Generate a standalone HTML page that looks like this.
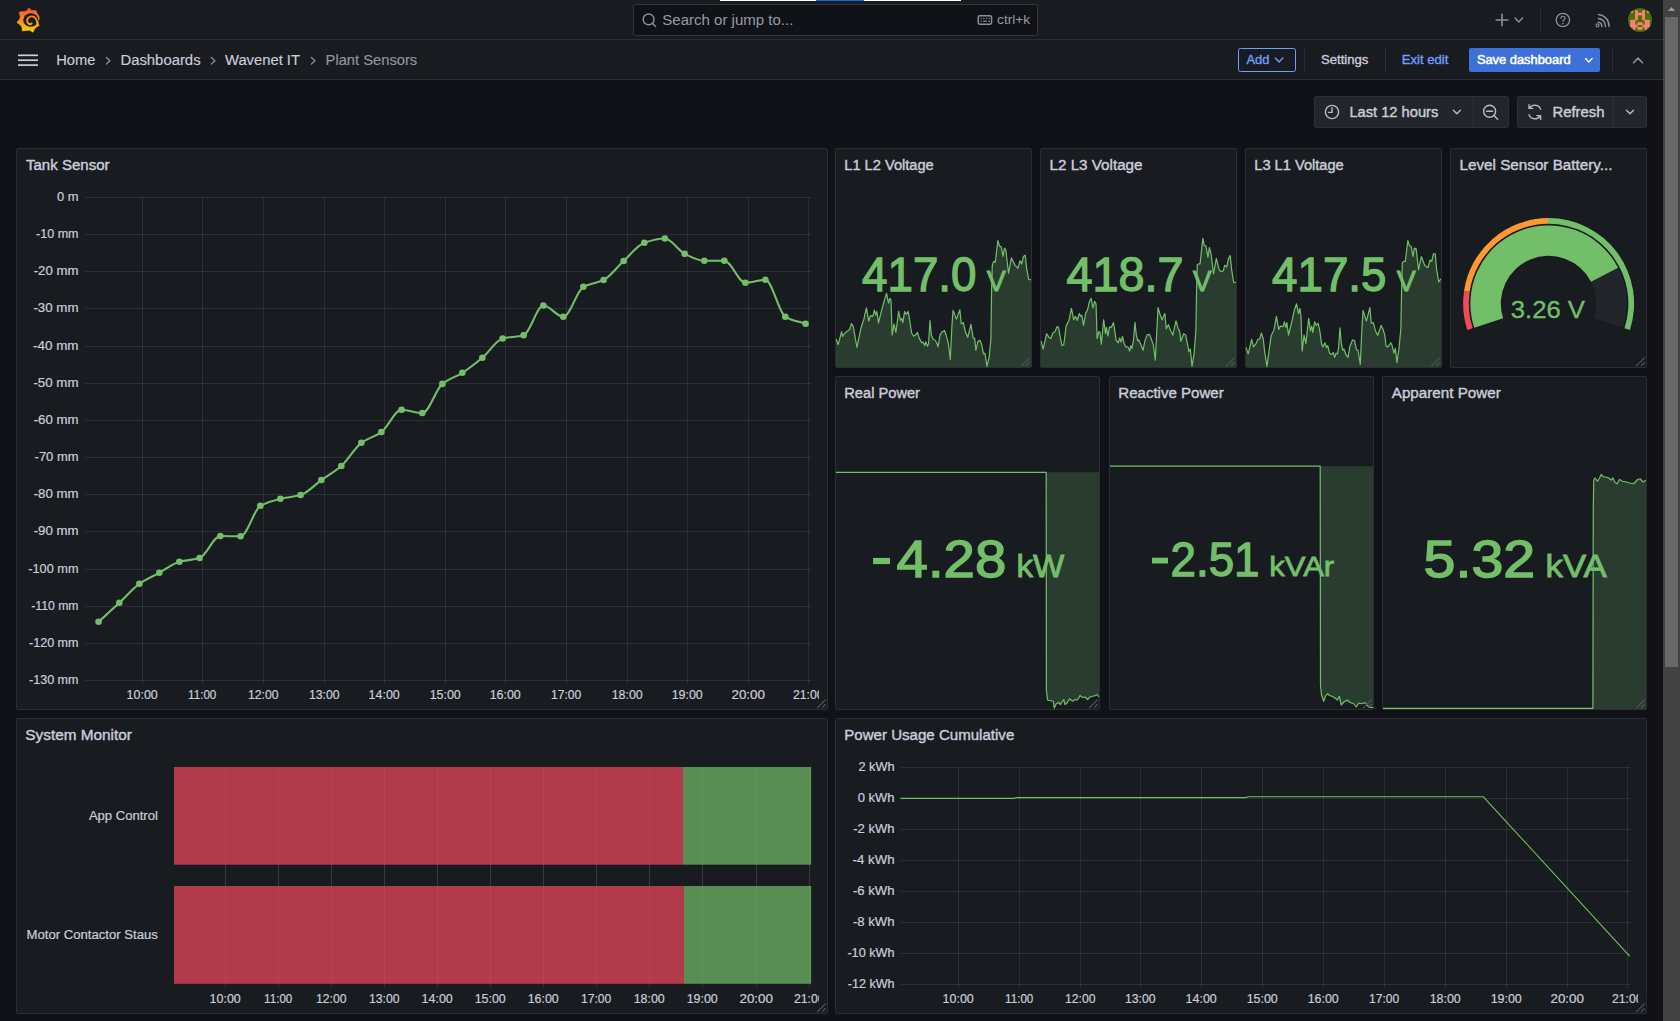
<!DOCTYPE html>
<html lang="en">
<head>
<meta charset="utf-8">
<title>Plant Sensors - Wavenet IT - Dashboards - Grafana</title>
<style>
html,body{margin:0;padding:0;background:#111217;overflow:hidden;}
body{width:1680px;height:1021px;font-family:"Liberation Sans",sans-serif;}
svg{display:block;font-family:"Liberation Sans",sans-serif;}
text{white-space:pre;}
</style>
</head>
<body>
<svg width="1680" height="1021" viewBox="0 0 1680 1021">
<defs>
<linearGradient id="lg" gradientUnits="userSpaceOnUse" x1="0" y1="8" x2="0" y2="32"><stop offset="0" stop-color="#f2552c"/><stop offset="0.45" stop-color="#f68a1e"/><stop offset="1" stop-color="#fcd00a"/></linearGradient>
<clipPath id="avc"><circle cx="1640" cy="20" r="12"/></clipPath>
<clipPath id="c1"><rect x="17" y="149" width="802" height="560"/></clipPath>
<clipPath id="c7"><rect x="17" y="719" width="802" height="294"/></clipPath>
<clipPath id="c8"><rect x="836.5" y="719" width="802" height="294"/></clipPath>
</defs>
<rect x="0" y="0" width="1680" height="1021" fill="#111217"/>
<rect x="0" y="0" width="1663" height="80" fill="#181b1f"/>
<line x1="0" y1="39.5" x2="1663" y2="39.5" stroke="#2c2e33" stroke-width="1"/>
<line x1="0" y1="79.5" x2="1663" y2="79.5" stroke="#2c2e33" stroke-width="1"/>
<rect x="720" y="0" width="241" height="1" fill="#ffffff"/>
<rect x="816" y="0" width="48" height="1" fill="#0a6fd8"/>
<g>
<path d="M28.87,7.82 L31.16,10.4 L36.03,10.47 L36.88,13.11 L38.99,16.29 L39.21,19.46 L38.22,19.64 L38.11,23.16 L39.21,25.46 L36.81,26.69 L34.69,28.81 L32.93,32.16 L29.75,30.22 L25.52,30.57 L22.28,30.92 L21.99,27.4 L20.58,25.28 L16.88,22.46 L19.52,19.28 L20.41,16.81 L18.99,12.41 L21.64,11.59 L24.81,11.52 L26.93,10.47Z" fill="url(#lg)" stroke="url(#lg)" stroke-width="0.6" stroke-linejoin="round"/>
<ellipse cx="30.81" cy="20.06" rx="7.6" ry="6.8" fill="#181b1f"/>
<path d="M37.23,25.7 C37.51,22.63 36.98,19.46 34.87,17.59 C32.93,16 29.93,16.18 28.17,17.94 C26.72,19.53 26.65,22.11 28.41,23.59 C29.47,24.47 31.09,24.65 31.59,23.41" fill="none" stroke="url(#lg)" stroke-width="1.9" stroke-linecap="round"/>
</g>
<rect x="633.5" y="4.5" width="404" height="31" fill="#111217" stroke="#35373d" rx="2"/>
<circle cx="648.6" cy="19.4" r="5.4" fill="none" stroke="#8e8f9c" stroke-width="1.4"/>
<line x1="652.6" y1="23.4" x2="655.6" y2="26.4" stroke="#8e8f9c" stroke-width="1.4" stroke-linecap="round"/>
<text x="662.3" y="25" font-size="14" fill="#9799a6" textLength="131.1" lengthAdjust="spacingAndGlyphs">Search or jump to...</text>
<rect x="978.2" y="15.7" width="13.4" height="8.6" rx="1.7" fill="none" stroke="#8e8f9c" stroke-width="1.45"/>
<rect x="980.6" y="17.9" width="1.2" height="1.2" fill="#8e8f9c"/>
<rect x="983.3" y="17.9" width="1.2" height="1.2" fill="#8e8f9c"/>
<rect x="986" y="17.9" width="1.2" height="1.2" fill="#8e8f9c"/>
<rect x="988.7" y="17.9" width="1.2" height="1.2" fill="#8e8f9c"/>
<rect x="980.6" y="20.6" width="1.2" height="1.2" fill="#8e8f9c"/>
<rect x="983" y="20.6" width="3.8" height="1.2" fill="#8e8f9c"/>
<rect x="988" y="20.6" width="1.9" height="1.2" fill="#8e8f9c"/>
<text x="997.1" y="24" font-size="12" fill="#9799a6" textLength="32.9" lengthAdjust="spacingAndGlyphs">ctrl+k</text>
<line x1="1496.2" y1="20" x2="1507.8" y2="20" stroke="#8e8f9c" stroke-width="1.6" stroke-linecap="round"/>
<line x1="1502" y1="14.2" x2="1502" y2="25.8" stroke="#8e8f9c" stroke-width="1.6" stroke-linecap="round"/>
<path d="M1515.1,18.1 L1518.8,21.9 L1522.5,18.1" fill="none" stroke="#8e8f9c" stroke-width="1.5" stroke-linecap="round" stroke-linejoin="round"/>
<line x1="1540.5" y1="8" x2="1540.5" y2="32" stroke="#2c2e33" stroke-width="1"/>
<circle cx="1562.9" cy="20" r="6.7" fill="none" stroke="#8e8f9c" stroke-width="1.3"/>
<path d="M1560.9,18.2 C1560.9,15.6 1565,15.6 1565,18.2 C1565,19.8 1563,19.8 1563,21.3" fill="none" stroke="#8e8f9c" stroke-width="1.2" stroke-linecap="round"/>
<circle cx="1563" cy="23.6" r="0.8" fill="#8e8f9c"/>
<g fill="none" stroke="#8e8f9c" stroke-width="1.5" stroke-linecap="round"><path d="M1598.4,14.6 A11.4,11.4 0 0 1 1609,26.4"/><path d="M1598.4,18.4 A7.6,7.6 0 0 1 1605.4,26.4"/><path d="M1598.4,22.2 A3.8,3.8 0 0 1 1601.8,26.4"/></g>
<circle cx="1597.5" cy="25.4" r="1.5" fill="none" stroke="#8e8f9c" stroke-width="1.1"/>
<g clip-path="url(#avc)">
<rect x="1628" y="8" width="24" height="24" fill="#4a7203"/>
<rect x="1635.05" y="10.25" width="2.7" height="2.7" fill="#ff837a"/>
<rect x="1642.25" y="10.25" width="2.7" height="2.7" fill="#ff837a"/>
<rect x="1635.05" y="12.65" width="2.7" height="2.7" fill="#ff837a"/>
<rect x="1642.25" y="12.65" width="2.7" height="2.7" fill="#ff837a"/>
<rect x="1635.05" y="15.05" width="2.7" height="2.7" fill="#ff837a"/>
<rect x="1642.25" y="15.05" width="2.7" height="2.7" fill="#ff837a"/>
<rect x="1635.05" y="17.45" width="2.7" height="2.7" fill="#ff837a"/>
<rect x="1642.25" y="17.45" width="2.7" height="2.7" fill="#ff837a"/>
<rect x="1637.45" y="12.65" width="2.7" height="2.7" fill="#ff837a"/>
<rect x="1639.85" y="12.65" width="2.7" height="2.7" fill="#ff837a"/>
<rect x="1630.25" y="10.25" width="2.7" height="2.7" fill="#ff837a"/>
<rect x="1647.05" y="10.25" width="2.7" height="2.7" fill="#ff837a"/>
<rect x="1630.25" y="19.85" width="2.7" height="2.7" fill="#ff837a"/>
<rect x="1632.65" y="19.85" width="2.7" height="2.7" fill="#ff837a"/>
<rect x="1644.65" y="19.85" width="2.7" height="2.7" fill="#ff837a"/>
<rect x="1647.05" y="19.85" width="2.7" height="2.7" fill="#ff837a"/>
<rect x="1630.25" y="22.25" width="2.7" height="2.7" fill="#ff837a"/>
<rect x="1632.65" y="22.25" width="2.7" height="2.7" fill="#ff837a"/>
<rect x="1644.65" y="22.25" width="2.7" height="2.7" fill="#ff837a"/>
<rect x="1647.05" y="22.25" width="2.7" height="2.7" fill="#ff837a"/>
<rect x="1630.25" y="24.65" width="2.7" height="2.7" fill="#ff837a"/>
<rect x="1632.65" y="24.65" width="2.7" height="2.7" fill="#ff837a"/>
<rect x="1644.65" y="24.65" width="2.7" height="2.7" fill="#ff837a"/>
<rect x="1647.05" y="24.65" width="2.7" height="2.7" fill="#ff837a"/>
<rect x="1635.05" y="24.65" width="2.7" height="2.7" fill="#ff837a"/>
<rect x="1642.25" y="24.65" width="2.7" height="2.7" fill="#ff837a"/>
<rect x="1632.65" y="27.05" width="2.7" height="2.7" fill="#ff837a"/>
<rect x="1644.65" y="27.05" width="2.7" height="2.7" fill="#ff837a"/>
<rect x="1637.45" y="22.25" width="2.7" height="2.7" fill="#ff837a"/>
<rect x="1639.85" y="22.25" width="2.7" height="2.7" fill="#ff837a"/>
<rect x="1637.45" y="27.05" width="2.7" height="2.7" fill="#ff837a"/>
<rect x="1639.85" y="27.05" width="2.7" height="2.7" fill="#ff837a"/>
</g>
<line x1="18" y1="55.3" x2="38" y2="55.3" stroke="#ccccdc" stroke-width="1.7"/>
<line x1="18" y1="60.2" x2="38" y2="60.2" stroke="#ccccdc" stroke-width="1.7"/>
<line x1="18" y1="65.1" x2="38" y2="65.1" stroke="#ccccdc" stroke-width="1.7"/>
<text x="56.25" y="65" font-size="14" fill="#ccccdc" textLength="39.15" lengthAdjust="spacingAndGlyphs" stroke="#ccccdc" stroke-width="0.15">Home</text>
<path d="M106.4,57.5 L110,60.8 L106.4,64.1" fill="none" stroke="#8e8f9c" stroke-width="1.3" stroke-linecap="round" stroke-linejoin="round"/>
<text x="120.4" y="65" font-size="14" fill="#ccccdc" textLength="80.2" lengthAdjust="spacingAndGlyphs" stroke="#ccccdc" stroke-width="0.15">Dashboards</text>
<path d="M211.4,57.5 L215,60.8 L211.4,64.1" fill="none" stroke="#8e8f9c" stroke-width="1.3" stroke-linecap="round" stroke-linejoin="round"/>
<text x="225" y="65" font-size="14" fill="#ccccdc" textLength="75" lengthAdjust="spacingAndGlyphs" stroke="#ccccdc" stroke-width="0.15">Wavenet IT</text>
<path d="M311.4,57.5 L315,60.8 L311.4,64.1" fill="none" stroke="#8e8f9c" stroke-width="1.3" stroke-linecap="round" stroke-linejoin="round"/>
<text x="325.6" y="65" font-size="14" fill="#9395a2" textLength="91.65" lengthAdjust="spacingAndGlyphs" stroke="#9395a2" stroke-width="0.15">Plant Sensors</text>
<rect x="1238.5" y="48.5" width="57" height="23" fill="none" stroke="#6e9fff" rx="2"/>
<text x="1246.4" y="64" font-size="12" fill="#6e9fff" textLength="22.9" lengthAdjust="spacingAndGlyphs" stroke="#6e9fff" stroke-width="0.34">Add</text>
<path d="M1275.4,58.1 L1279.1,61.9 L1282.8,58.1" fill="none" stroke="#6e9fff" stroke-width="1.4" stroke-linecap="round" stroke-linejoin="round"/>
<line x1="1304.5" y1="48" x2="1304.5" y2="72" stroke="#2c2e33" stroke-width="1"/>
<text x="1321.1" y="64" font-size="12" fill="#ccccdc" textLength="47.2" lengthAdjust="spacingAndGlyphs" stroke="#ccccdc" stroke-width="0.34">Settings</text>
<line x1="1385.5" y1="48" x2="1385.5" y2="72" stroke="#2c2e33" stroke-width="1"/>
<text x="1401.7" y="64" font-size="12" fill="#6e9fff" textLength="46.6" lengthAdjust="spacingAndGlyphs" stroke="#6e9fff" stroke-width="0.34">Exit edit</text>
<rect x="1469" y="48" width="131" height="24" fill="#3d71d9" rx="2"/>
<text x="1476.9" y="64" font-size="12" fill="#ffffff" textLength="93.7" lengthAdjust="spacingAndGlyphs" stroke="#ffffff" stroke-width="0.5">Save dashboard</text>
<path d="M1585.5,58.5 L1588.8,61.9 L1592.1,58.5" fill="none" stroke="#ffffff" stroke-width="1.4" stroke-linecap="round" stroke-linejoin="round"/>
<line x1="1612.5" y1="48" x2="1612.5" y2="72" stroke="#2c2e33" stroke-width="1"/>
<path d="M1633.5,62.7 L1638,58.1 L1642.5,62.7" fill="none" stroke="#8e8f9c" stroke-width="1.6" stroke-linecap="round" stroke-linejoin="round"/>
<rect x="1314.5" y="96.5" width="194" height="31" fill="#22252b" stroke="#2d3036" rx="2"/>
<line x1="1473.5" y1="97" x2="1473.5" y2="127" stroke="#2d3036" stroke-width="1"/>
<rect x="1517.5" y="96.5" width="129" height="31" fill="#22252b" stroke="#2d3036" rx="2"/>
<line x1="1613.5" y1="97" x2="1613.5" y2="127" stroke="#2d3036" stroke-width="1"/>
<circle cx="1332" cy="112" r="6.6" fill="none" stroke="#b9bac8" stroke-width="1.4"/>
<path d="M1332,107.8 V112.4 H1328.6" fill="none" stroke="#b9bac8" stroke-width="1.4" stroke-linecap="round" stroke-linejoin="round"/>
<text x="1349.4" y="117" font-size="14" fill="#ccccdc" textLength="88.9" lengthAdjust="spacingAndGlyphs" stroke="#ccccdc" stroke-width="0.39">Last 12 hours</text>
<path d="M1453.4,110.2 L1456.9,113.8 L1460.4,110.2" fill="none" stroke="#b9bac8" stroke-width="1.4" stroke-linecap="round" stroke-linejoin="round"/>
<circle cx="1489.6" cy="111.2" r="6" fill="none" stroke="#b9bac8" stroke-width="1.4"/>
<line x1="1486.6" y1="111.2" x2="1492.6" y2="111.2" stroke="#b9bac8" stroke-width="1.4" stroke-linecap="round"/>
<line x1="1494" y1="115.6" x2="1497.6" y2="119.2" stroke="#b9bac8" stroke-width="1.4" stroke-linecap="round"/>
<g fill="none" stroke="#b9bac8" stroke-width="1.4" stroke-linecap="round" stroke-linejoin="round"><path d="M1540.6,109.2 A6.2,6.2 0 0 0 1529.6,108"/><path d="M1529,104.6 V108.4 H1532.8"/><path d="M1529,114.8 A6.2,6.2 0 0 0 1540,116"/><path d="M1540.6,119.4 V115.6 H1536.8"/></g>
<text x="1552.5" y="117" font-size="14" fill="#ccccdc" textLength="51.9" lengthAdjust="spacingAndGlyphs" stroke="#ccccdc" stroke-width="0.39">Refresh</text>
<path d="M1626.5,110.2 L1630,113.8 L1633.5,110.2" fill="none" stroke="#b9bac8" stroke-width="1.4" stroke-linecap="round" stroke-linejoin="round"/>
<rect x="1663" y="0" width="17" height="1021" fill="#424242"/>
<rect x="1665" y="17" width="13" height="650" fill="#686868"/>
<path d="M1667.9,11 L1671.5,6.9 L1675.2,11 Z" fill="#9b9b9b"/>
<rect x="16.5" y="148.5" width="811" height="561" fill="#181b1f" stroke="#2c2e33" rx="1.5"/>
<text x="26" y="170" font-size="14" fill="#ccccdc" textLength="83.5" lengthAdjust="spacingAndGlyphs" stroke="#ccccdc" stroke-width="0.39">Tank Sensor</text>
<line x1="85" y1="197.5" x2="811.5" y2="197.5" stroke="rgba(240,250,255,0.09)" stroke-width="1"/>
<text x="57" y="201.4" font-size="12" fill="#ccccdc" textLength="21.5" lengthAdjust="spacingAndGlyphs" stroke="#ccccdc" stroke-width="0.2">0 m</text>
<line x1="85" y1="234.5" x2="811.5" y2="234.5" stroke="rgba(240,250,255,0.09)" stroke-width="1"/>
<text x="36.1" y="238.4" font-size="12" fill="#ccccdc" textLength="42.4" lengthAdjust="spacingAndGlyphs" stroke="#ccccdc" stroke-width="0.2">-10 mm</text>
<line x1="85" y1="271.5" x2="811.5" y2="271.5" stroke="rgba(240,250,255,0.09)" stroke-width="1"/>
<text x="33.7" y="275.4" font-size="12" fill="#ccccdc" textLength="44.8" lengthAdjust="spacingAndGlyphs" stroke="#ccccdc" stroke-width="0.2">-20 mm</text>
<line x1="85" y1="308.5" x2="811.5" y2="308.5" stroke="rgba(240,250,255,0.09)" stroke-width="1"/>
<text x="33.4" y="312.4" font-size="12" fill="#ccccdc" textLength="45.1" lengthAdjust="spacingAndGlyphs" stroke="#ccccdc" stroke-width="0.2">-30 mm</text>
<line x1="85" y1="346.5" x2="811.5" y2="346.5" stroke="rgba(240,250,255,0.09)" stroke-width="1"/>
<text x="33" y="350.4" font-size="12" fill="#ccccdc" textLength="45.5" lengthAdjust="spacingAndGlyphs" stroke="#ccccdc" stroke-width="0.2">-40 mm</text>
<line x1="85" y1="383.5" x2="811.5" y2="383.5" stroke="rgba(240,250,255,0.09)" stroke-width="1"/>
<text x="33.4" y="387.4" font-size="12" fill="#ccccdc" textLength="45.1" lengthAdjust="spacingAndGlyphs" stroke="#ccccdc" stroke-width="0.2">-50 mm</text>
<line x1="85" y1="420.5" x2="811.5" y2="420.5" stroke="rgba(240,250,255,0.09)" stroke-width="1"/>
<text x="33.7" y="424.4" font-size="12" fill="#ccccdc" textLength="44.8" lengthAdjust="spacingAndGlyphs" stroke="#ccccdc" stroke-width="0.2">-60 mm</text>
<line x1="85" y1="457.5" x2="811.5" y2="457.5" stroke="rgba(240,250,255,0.09)" stroke-width="1"/>
<text x="34.6" y="461.4" font-size="12" fill="#ccccdc" textLength="43.9" lengthAdjust="spacingAndGlyphs" stroke="#ccccdc" stroke-width="0.2">-70 mm</text>
<line x1="85" y1="494.5" x2="811.5" y2="494.5" stroke="rgba(240,250,255,0.09)" stroke-width="1"/>
<text x="33.7" y="498.4" font-size="12" fill="#ccccdc" textLength="44.8" lengthAdjust="spacingAndGlyphs" stroke="#ccccdc" stroke-width="0.2">-80 mm</text>
<line x1="85" y1="531.5" x2="811.5" y2="531.5" stroke="rgba(240,250,255,0.09)" stroke-width="1"/>
<text x="33.7" y="535.4" font-size="12" fill="#ccccdc" textLength="44.8" lengthAdjust="spacingAndGlyphs" stroke="#ccccdc" stroke-width="0.2">-90 mm</text>
<line x1="85" y1="569.5" x2="811.5" y2="569.5" stroke="rgba(240,250,255,0.09)" stroke-width="1"/>
<text x="28.3" y="573.4" font-size="12" fill="#ccccdc" textLength="50.2" lengthAdjust="spacingAndGlyphs" stroke="#ccccdc" stroke-width="0.2">-100 mm</text>
<line x1="85" y1="606.5" x2="811.5" y2="606.5" stroke="rgba(240,250,255,0.09)" stroke-width="1"/>
<text x="31.2" y="610.4" font-size="12" fill="#ccccdc" textLength="47.3" lengthAdjust="spacingAndGlyphs" stroke="#ccccdc" stroke-width="0.2">-110 mm</text>
<line x1="85" y1="643.5" x2="811.5" y2="643.5" stroke="rgba(240,250,255,0.09)" stroke-width="1"/>
<text x="29" y="647.4" font-size="12" fill="#ccccdc" textLength="49.5" lengthAdjust="spacingAndGlyphs" stroke="#ccccdc" stroke-width="0.2">-120 mm</text>
<line x1="85" y1="680.5" x2="811.5" y2="680.5" stroke="rgba(240,250,255,0.09)" stroke-width="1"/>
<text x="29" y="684.4" font-size="12" fill="#ccccdc" textLength="49.5" lengthAdjust="spacingAndGlyphs" stroke="#ccccdc" stroke-width="0.2">-130 mm</text>
<g clip-path="url(#c1)">
<line x1="142.5" y1="197.5" x2="142.5" y2="684.5" stroke="rgba(240,250,255,0.09)" stroke-width="1"/>
<text x="126.6" y="699.2" font-size="12" fill="#ccccdc" textLength="31.2" lengthAdjust="spacingAndGlyphs" stroke="#ccccdc" stroke-width="0.2">10:00</text>
<line x1="202.5" y1="197.5" x2="202.5" y2="684.5" stroke="rgba(240,250,255,0.09)" stroke-width="1"/>
<text x="188.1" y="699.2" font-size="12" fill="#ccccdc" textLength="28.2" lengthAdjust="spacingAndGlyphs" stroke="#ccccdc" stroke-width="0.2">11:00</text>
<line x1="263.5" y1="197.5" x2="263.5" y2="684.5" stroke="rgba(240,250,255,0.09)" stroke-width="1"/>
<text x="247.9" y="699.2" font-size="12" fill="#ccccdc" textLength="30.6" lengthAdjust="spacingAndGlyphs" stroke="#ccccdc" stroke-width="0.2">12:00</text>
<line x1="324.5" y1="197.5" x2="324.5" y2="684.5" stroke="rgba(240,250,255,0.09)" stroke-width="1"/>
<text x="308.9" y="699.2" font-size="12" fill="#ccccdc" textLength="30.6" lengthAdjust="spacingAndGlyphs" stroke="#ccccdc" stroke-width="0.2">13:00</text>
<line x1="384.5" y1="197.5" x2="384.5" y2="684.5" stroke="rgba(240,250,255,0.09)" stroke-width="1"/>
<text x="368.6" y="699.2" font-size="12" fill="#ccccdc" textLength="31.2" lengthAdjust="spacingAndGlyphs" stroke="#ccccdc" stroke-width="0.2">14:00</text>
<line x1="445.5" y1="197.5" x2="445.5" y2="684.5" stroke="rgba(240,250,255,0.09)" stroke-width="1"/>
<text x="429.65" y="699.2" font-size="12" fill="#ccccdc" textLength="31.1" lengthAdjust="spacingAndGlyphs" stroke="#ccccdc" stroke-width="0.2">15:00</text>
<line x1="505.5" y1="197.5" x2="505.5" y2="684.5" stroke="rgba(240,250,255,0.09)" stroke-width="1"/>
<text x="489.65" y="699.2" font-size="12" fill="#ccccdc" textLength="31.1" lengthAdjust="spacingAndGlyphs" stroke="#ccccdc" stroke-width="0.2">16:00</text>
<line x1="566.5" y1="197.5" x2="566.5" y2="684.5" stroke="rgba(240,250,255,0.09)" stroke-width="1"/>
<text x="551.1" y="699.2" font-size="12" fill="#ccccdc" textLength="30.2" lengthAdjust="spacingAndGlyphs" stroke="#ccccdc" stroke-width="0.2">17:00</text>
<line x1="627.5" y1="197.5" x2="627.5" y2="684.5" stroke="rgba(240,250,255,0.09)" stroke-width="1"/>
<text x="611.65" y="699.2" font-size="12" fill="#ccccdc" textLength="31.1" lengthAdjust="spacingAndGlyphs" stroke="#ccccdc" stroke-width="0.2">18:00</text>
<line x1="687.5" y1="197.5" x2="687.5" y2="684.5" stroke="rgba(240,250,255,0.09)" stroke-width="1"/>
<text x="671.65" y="699.2" font-size="12" fill="#ccccdc" textLength="31.1" lengthAdjust="spacingAndGlyphs" stroke="#ccccdc" stroke-width="0.2">19:00</text>
<line x1="748.5" y1="197.5" x2="748.5" y2="684.5" stroke="rgba(240,250,255,0.09)" stroke-width="1"/>
<text x="731.45" y="699.2" font-size="12" fill="#ccccdc" textLength="33.5" lengthAdjust="spacingAndGlyphs" stroke="#ccccdc" stroke-width="0.2">20:00</text>
<line x1="808.5" y1="197.5" x2="808.5" y2="684.5" stroke="rgba(240,250,255,0.09)" stroke-width="1"/>
<text x="792.9" y="699.2" font-size="12" fill="#ccccdc" textLength="30.6" lengthAdjust="spacingAndGlyphs" stroke="#ccccdc" stroke-width="0.2">21:00</text>
</g>
<rect x="819" y="686" width="8" height="18" fill="#181b1f"/>
<path d="M98.6,621.8 C105.52,615.47 112.43,609.25 119.35,602.8 C126.02,596.58 132.68,588.44 139.35,583.8 C146.02,579.16 152.68,576.47 159.35,572.8 C166.02,569.13 172.68,563.65 179.35,561.8 C186.1,559.93 192.85,560.17 199.6,558.05 C206.52,555.88 213.43,536.05 220.35,536.05 C227.1,536.05 233.85,536.3 240.6,536.3 C247.18,536.3 253.77,509.56 260.35,505.8 C267.02,501.99 273.68,500.42 280.35,498.8 C287.1,497.16 293.85,497.04 300.6,495.05 C307.52,493.02 314.43,484.97 321.35,480.05 C328.02,475.31 334.68,471.88 341.35,466.05 C348.02,460.22 354.68,447.7 361.35,442.8 C368.02,437.9 374.68,436.86 381.35,432.05 C388.1,427.18 394.85,409.8 401.6,409.8 C408.52,409.8 415.43,413.05 422.35,413.05 C429.02,413.05 435.68,389.26 442.35,383.9 C449.02,378.54 455.68,377.05 462.35,372.8 C469.02,368.55 475.68,363.39 482.35,357.8 C489.1,352.14 495.85,340.35 502.6,338.55 C509.6,336.68 516.6,337.28 523.6,335.3 C530.18,333.44 536.77,305.55 543.35,305.55 C550.02,305.55 556.68,316.8 563.35,316.8 C570.02,316.8 576.68,290.44 583.35,286.8 C590.1,283.11 596.85,283.38 603.6,280.05 C610.27,276.76 616.93,267.14 623.6,261.05 C630.52,254.73 637.43,245.12 644.35,242.8 C651.18,240.51 658.02,238.55 664.85,238.55 C671.43,238.55 678.02,250.6 684.6,253.8 C691.18,257 697.77,260.8 704.35,260.8 C711.02,260.8 717.68,260.8 724.35,260.8 C731.35,260.8 738.35,282.8 745.35,282.8 C752.02,282.8 758.68,279.8 765.35,279.8 C772.02,279.8 778.68,312.91 785.35,316.8 C792.1,320.74 798.85,321.47 805.6,323.8" fill="none" stroke="#73bf69" stroke-width="2.1" stroke-linejoin="round" stroke-linecap="round"/>
<circle cx="98.6" cy="621.8" r="3.3" fill="#73bf69"/>
<circle cx="119.35" cy="602.8" r="3.3" fill="#73bf69"/>
<circle cx="139.35" cy="583.8" r="3.3" fill="#73bf69"/>
<circle cx="159.35" cy="572.8" r="3.3" fill="#73bf69"/>
<circle cx="179.35" cy="561.8" r="3.3" fill="#73bf69"/>
<circle cx="199.6" cy="558.05" r="3.3" fill="#73bf69"/>
<circle cx="220.35" cy="536.05" r="3.3" fill="#73bf69"/>
<circle cx="240.6" cy="536.3" r="3.3" fill="#73bf69"/>
<circle cx="260.35" cy="505.8" r="3.3" fill="#73bf69"/>
<circle cx="280.35" cy="498.8" r="3.3" fill="#73bf69"/>
<circle cx="300.6" cy="495.05" r="3.3" fill="#73bf69"/>
<circle cx="321.35" cy="480.05" r="3.3" fill="#73bf69"/>
<circle cx="341.35" cy="466.05" r="3.3" fill="#73bf69"/>
<circle cx="361.35" cy="442.8" r="3.3" fill="#73bf69"/>
<circle cx="381.35" cy="432.05" r="3.3" fill="#73bf69"/>
<circle cx="401.6" cy="409.8" r="3.3" fill="#73bf69"/>
<circle cx="422.35" cy="413.05" r="3.3" fill="#73bf69"/>
<circle cx="442.35" cy="383.9" r="3.3" fill="#73bf69"/>
<circle cx="462.35" cy="372.8" r="3.3" fill="#73bf69"/>
<circle cx="482.35" cy="357.8" r="3.3" fill="#73bf69"/>
<circle cx="502.6" cy="338.55" r="3.3" fill="#73bf69"/>
<circle cx="523.6" cy="335.3" r="3.3" fill="#73bf69"/>
<circle cx="543.35" cy="305.55" r="3.3" fill="#73bf69"/>
<circle cx="563.35" cy="316.8" r="3.3" fill="#73bf69"/>
<circle cx="583.35" cy="286.8" r="3.3" fill="#73bf69"/>
<circle cx="603.6" cy="280.05" r="3.3" fill="#73bf69"/>
<circle cx="623.6" cy="261.05" r="3.3" fill="#73bf69"/>
<circle cx="644.35" cy="242.8" r="3.3" fill="#73bf69"/>
<circle cx="664.85" cy="238.55" r="3.3" fill="#73bf69"/>
<circle cx="684.6" cy="253.8" r="3.3" fill="#73bf69"/>
<circle cx="704.35" cy="260.8" r="3.3" fill="#73bf69"/>
<circle cx="724.35" cy="260.8" r="3.3" fill="#73bf69"/>
<circle cx="745.35" cy="282.8" r="3.3" fill="#73bf69"/>
<circle cx="765.35" cy="279.8" r="3.3" fill="#73bf69"/>
<circle cx="785.35" cy="316.8" r="3.3" fill="#73bf69"/>
<circle cx="805.6" cy="323.8" r="3.3" fill="#73bf69"/>
<line x1="817.2" y1="708.1" x2="825.85" y2="699.3" stroke="#50525a" stroke-width="1.2"/>
<line x1="822.1" y1="707.7" x2="825.65" y2="704.2" stroke="#50525a" stroke-width="1.2"/>
<rect x="835.5" y="148.5" width="196" height="219" fill="#181b1f" stroke="#2c2e33" rx="1.5"/>
<text x="844.25" y="170" font-size="14" fill="#ccccdc" textLength="89.5" lengthAdjust="spacingAndGlyphs" stroke="#ccccdc" stroke-width="0.39">L1 L2 Voltage</text>
<polygon points="836,367 836,339.27 836.09,339.27 838.17,344.55 841.65,331.62 842.62,336.48 845.13,333.01 847.91,330.64 849.58,329.53 851.39,323.69 853.19,326.05 854.86,335.79 856.95,347.33 861.12,327.44 863.9,319.1 866.41,307.97 868.77,321.18 870.44,315.62 872.94,316.32 874.33,310.06 875.72,314.93 876.84,311.45 878.51,322.85 881.29,311.45 884.35,300.32 886.57,293.37 888.52,303.1 889.91,298.24 891.02,300.32 892.14,335.09 894.08,323.97 895.89,332.31 898.67,311.45 900.48,320.49 901.73,318.4 902.85,322.58 904.65,311.45 906.32,314.23 908.13,311.45 909.8,321.18 911.61,333.01 913.55,336.21 916.06,334.4 917.45,332.31 919.12,337.87 921.62,342.74 923.01,342.05 924.68,345.52 925.79,341.77 927.46,346.22 928.58,343.44 929.97,320.49 931.36,335.09 933.03,339.27 934.83,339.96 936.64,342.74 938.03,346.92 939.98,335.09 941.79,332.03 944.57,330.64 946.38,335.79 948.33,343.44 950.27,359.43 951.94,325.36 953.05,310.34 956.39,319.1 959.87,309.78 961.26,323.97 963.35,322.58 965.43,332.03 967.8,337.18 971,324.24 973.08,337.87 974.75,338.57 975.86,350.39 977.95,341.35 980.04,340.38 981.71,344.83 983.51,353.87 984.9,353.17 986.99,366.39 989.08,357.35 990.88,339.27 991.58,290.59 992.28,265.55 993.67,261.38 995.34,262.08 997.84,240.52 999.51,246.08 1001.18,246.78 1002.98,256.51 1004.38,248.17 1005.77,249.56 1008.55,273.2 1011.33,257.9 1014.81,264.86 1017.87,268.33 1020.09,260.68 1021.76,263.88 1023.43,256.51 1025.24,255.12 1026.63,268.33 1028.71,279.46 1030.38,279.74 1031,279.74 1031,367" fill="#2a3c2f"/>
<polyline points="836,339.27 836.09,339.27 838.17,344.55 841.65,331.62 842.62,336.48 845.13,333.01 847.91,330.64 849.58,329.53 851.39,323.69 853.19,326.05 854.86,335.79 856.95,347.33 861.12,327.44 863.9,319.1 866.41,307.97 868.77,321.18 870.44,315.62 872.94,316.32 874.33,310.06 875.72,314.93 876.84,311.45 878.51,322.85 881.29,311.45 884.35,300.32 886.57,293.37 888.52,303.1 889.91,298.24 891.02,300.32 892.14,335.09 894.08,323.97 895.89,332.31 898.67,311.45 900.48,320.49 901.73,318.4 902.85,322.58 904.65,311.45 906.32,314.23 908.13,311.45 909.8,321.18 911.61,333.01 913.55,336.21 916.06,334.4 917.45,332.31 919.12,337.87 921.62,342.74 923.01,342.05 924.68,345.52 925.79,341.77 927.46,346.22 928.58,343.44 929.97,320.49 931.36,335.09 933.03,339.27 934.83,339.96 936.64,342.74 938.03,346.92 939.98,335.09 941.79,332.03 944.57,330.64 946.38,335.79 948.33,343.44 950.27,359.43 951.94,325.36 953.05,310.34 956.39,319.1 959.87,309.78 961.26,323.97 963.35,322.58 965.43,332.03 967.8,337.18 971,324.24 973.08,337.87 974.75,338.57 975.86,350.39 977.95,341.35 980.04,340.38 981.71,344.83 983.51,353.87 984.9,353.17 986.99,366.39 989.08,357.35 990.88,339.27 991.58,290.59 992.28,265.55 993.67,261.38 995.34,262.08 997.84,240.52 999.51,246.08 1001.18,246.78 1002.98,256.51 1004.38,248.17 1005.77,249.56 1008.55,273.2 1011.33,257.9 1014.81,264.86 1017.87,268.33 1020.09,260.68 1021.76,263.88 1023.43,256.51 1025.24,255.12 1026.63,268.33 1028.71,279.46 1030.38,279.74 1031,279.74" fill="none" stroke="#73bf69" stroke-width="1.2" stroke-linejoin="round"/>
<text x="862.1" y="290.9" font-size="49" fill="#73bf69" textLength="114.4" lengthAdjust="spacingAndGlyphs" stroke="#73bf69" stroke-width="1.37">417.0</text>
<text x="986.7" y="290.9" font-size="29.8" fill="#73bf69" textLength="19.1" lengthAdjust="spacingAndGlyphs" stroke="#73bf69" stroke-width="0.83">V</text>
<line x1="1021.2" y1="366.1" x2="1029.85" y2="357.3" stroke="#50525a" stroke-width="1.2"/>
<line x1="1026.1" y1="365.7" x2="1029.65" y2="362.2" stroke="#50525a" stroke-width="1.2"/>
<rect x="1040.5" y="148.5" width="196" height="219" fill="#181b1f" stroke="#2c2e33" rx="1.5"/>
<text x="1049.5" y="170" font-size="14" fill="#ccccdc" textLength="93" lengthAdjust="spacingAndGlyphs" stroke="#ccccdc" stroke-width="0.39">L2 L3 Voltage</text>
<polygon points="1041,367 1041,341.35 1041.09,341.35 1043.17,349 1046.65,333.7 1048.74,337.18 1050.82,338.57 1052.91,333.01 1054.99,331.62 1057.08,326.47 1058.47,327.44 1059.86,335.09 1061.95,345.52 1063.76,344.83 1066.12,326.05 1068.9,320.49 1071.41,308.39 1073.77,319.79 1075.44,316.32 1077.25,320.49 1079.33,313.54 1080.72,316.32 1081.84,315.34 1083.51,325.36 1085.59,313.54 1087.68,309.36 1089.35,301.71 1091.16,298.24 1092.96,307.97 1094.63,301.3 1096.02,303.8 1097.14,338.57 1098.81,331.62 1099.92,332.03 1101.31,344.13 1103.67,319.79 1105.48,333.7 1106.45,327.44 1107.85,335.79 1109.65,326.75 1111.32,327.44 1113.41,322.58 1114.8,330.92 1116.19,340.38 1118.28,342.74 1119.67,337.87 1121.06,342.05 1122.45,336.48 1124.12,343.44 1125.93,346.92 1128.01,346.92 1129.68,351.09 1130.79,345.52 1131.91,348.72 1133.58,339.27 1134.97,322.3 1136.36,335.09 1137.75,340.93 1138.86,339.96 1141.23,345.52 1143.03,350.39 1144.98,340.66 1147.21,334.82 1149.57,334.4 1151.38,339.27 1153.33,344.83 1155.27,360.13 1156.94,328.14 1158.05,307.55 1160,314.23 1162.09,319.79 1164.87,313.54 1166.26,328.83 1168.35,324.66 1170.43,330.23 1172.8,335.09 1176,320.91 1178.08,328.14 1179.75,331.62 1180.86,341.35 1183.65,333.7 1185.73,335.09 1187.12,342.05 1188.93,351.78 1190.32,349 1191.99,366.39 1194.08,353.87 1195.88,330.92 1196.58,290.59 1197.28,264.86 1198.67,263.88 1200.06,263.88 1202.84,238.43 1204.23,245.39 1205.9,246.08 1207.98,257.21 1209.38,247.47 1211.18,254.43 1213.55,273.9 1216.33,258.32 1219.11,269.72 1221.48,271.81 1223.28,270.84 1224.67,265.27 1226.76,266.94 1228.43,258.88 1230.24,255.54 1231.63,269.72 1233.71,282.52 1235.38,282.24 1236,282.24 1236,367" fill="#2a3c2f"/>
<polyline points="1041,341.35 1041.09,341.35 1043.17,349 1046.65,333.7 1048.74,337.18 1050.82,338.57 1052.91,333.01 1054.99,331.62 1057.08,326.47 1058.47,327.44 1059.86,335.09 1061.95,345.52 1063.76,344.83 1066.12,326.05 1068.9,320.49 1071.41,308.39 1073.77,319.79 1075.44,316.32 1077.25,320.49 1079.33,313.54 1080.72,316.32 1081.84,315.34 1083.51,325.36 1085.59,313.54 1087.68,309.36 1089.35,301.71 1091.16,298.24 1092.96,307.97 1094.63,301.3 1096.02,303.8 1097.14,338.57 1098.81,331.62 1099.92,332.03 1101.31,344.13 1103.67,319.79 1105.48,333.7 1106.45,327.44 1107.85,335.79 1109.65,326.75 1111.32,327.44 1113.41,322.58 1114.8,330.92 1116.19,340.38 1118.28,342.74 1119.67,337.87 1121.06,342.05 1122.45,336.48 1124.12,343.44 1125.93,346.92 1128.01,346.92 1129.68,351.09 1130.79,345.52 1131.91,348.72 1133.58,339.27 1134.97,322.3 1136.36,335.09 1137.75,340.93 1138.86,339.96 1141.23,345.52 1143.03,350.39 1144.98,340.66 1147.21,334.82 1149.57,334.4 1151.38,339.27 1153.33,344.83 1155.27,360.13 1156.94,328.14 1158.05,307.55 1160,314.23 1162.09,319.79 1164.87,313.54 1166.26,328.83 1168.35,324.66 1170.43,330.23 1172.8,335.09 1176,320.91 1178.08,328.14 1179.75,331.62 1180.86,341.35 1183.65,333.7 1185.73,335.09 1187.12,342.05 1188.93,351.78 1190.32,349 1191.99,366.39 1194.08,353.87 1195.88,330.92 1196.58,290.59 1197.28,264.86 1198.67,263.88 1200.06,263.88 1202.84,238.43 1204.23,245.39 1205.9,246.08 1207.98,257.21 1209.38,247.47 1211.18,254.43 1213.55,273.9 1216.33,258.32 1219.11,269.72 1221.48,271.81 1223.28,270.84 1224.67,265.27 1226.76,266.94 1228.43,258.88 1230.24,255.54 1231.63,269.72 1233.71,282.52 1235.38,282.24 1236,282.24" fill="none" stroke="#73bf69" stroke-width="1.2" stroke-linejoin="round"/>
<text x="1066.4" y="290.9" font-size="48.1" fill="#73bf69" textLength="117.1" lengthAdjust="spacingAndGlyphs" stroke="#73bf69" stroke-width="1.35">418.7</text>
<text x="1192.7" y="290.9" font-size="29.8" fill="#73bf69" textLength="18.8" lengthAdjust="spacingAndGlyphs" stroke="#73bf69" stroke-width="0.83">V</text>
<line x1="1226.2" y1="366.1" x2="1234.85" y2="357.3" stroke="#50525a" stroke-width="1.2"/>
<line x1="1231.1" y1="365.7" x2="1234.65" y2="362.2" stroke="#50525a" stroke-width="1.2"/>
<rect x="1245.5" y="148.5" width="196" height="219" fill="#181b1f" stroke="#2c2e33" rx="1.5"/>
<text x="1254.25" y="170" font-size="14" fill="#ccccdc" textLength="89.5" lengthAdjust="spacingAndGlyphs" stroke="#ccccdc" stroke-width="0.39">L3 L1 Voltage</text>
<polygon points="1246,367 1246,347.61 1246.09,347.61 1248.17,353.87 1251.65,339.27 1253.46,346.92 1255.82,344.13 1257.91,339.27 1259.58,339.27 1261.39,333.01 1263.19,338.57 1264.86,353.17 1266.95,366.39 1271.12,335.79 1273.9,330.23 1276.41,316.32 1278.77,329.53 1280.44,326.05 1282.94,326.75 1284.33,321.88 1285.72,327.44 1286.84,322.58 1288.51,335.09 1291.29,323.97 1294.35,310.06 1296.57,303.8 1298.52,313.54 1299.91,308.39 1301.02,317.01 1302.14,351.09 1304.08,335.09 1305.89,343.44 1308.67,318.4 1310.48,330.92 1311.73,326.05 1312.85,332.31 1314.65,321.88 1316.32,325.36 1318.13,323.27 1319.8,330.92 1321.61,344.13 1323,346.92 1324.95,342.74 1326.34,347.61 1327.73,345.52 1329.54,353.17 1331.62,354.56 1333.29,352.48 1334.68,357.35 1336.07,353.17 1337.46,353.87 1338.58,347.61 1339.97,327.86 1341.36,343.44 1342.75,350.39 1343.86,349 1346.23,355.26 1348.03,357.35 1349.98,346.22 1352.48,339.96 1354.57,340.66 1356.38,349.7 1358.05,350.39 1360.27,364.3 1361.94,328.14 1363.05,310.34 1366.39,321.18 1369.87,307.55 1371.26,323.27 1373.35,322.58 1375.43,330.92 1377.8,335.37 1381,325.36 1383.08,329.53 1384.75,335.09 1386.14,346.22 1387.95,346.92 1390.73,342.74 1392.12,345.52 1393.93,353.17 1395.32,348.31 1396.99,362.63 1399.08,347.61 1400.88,328.14 1401.58,290.59 1402.28,262.77 1403.67,261.38 1405.34,261.38 1407.84,240.52 1409.51,245.8 1411.18,246.36 1412.98,256.51 1414.38,248.17 1416.18,248.86 1418.55,269.72 1421.33,256.51 1424.81,265.55 1427.87,267.64 1430.09,259.99 1431.76,261.38 1433.43,253.73 1435.24,253.73 1436.63,269.72 1438.71,281.96 1440.38,279.46 1441,279.46 1441,367" fill="#2a3c2f"/>
<polyline points="1246,347.61 1246.09,347.61 1248.17,353.87 1251.65,339.27 1253.46,346.92 1255.82,344.13 1257.91,339.27 1259.58,339.27 1261.39,333.01 1263.19,338.57 1264.86,353.17 1266.95,366.39 1271.12,335.79 1273.9,330.23 1276.41,316.32 1278.77,329.53 1280.44,326.05 1282.94,326.75 1284.33,321.88 1285.72,327.44 1286.84,322.58 1288.51,335.09 1291.29,323.97 1294.35,310.06 1296.57,303.8 1298.52,313.54 1299.91,308.39 1301.02,317.01 1302.14,351.09 1304.08,335.09 1305.89,343.44 1308.67,318.4 1310.48,330.92 1311.73,326.05 1312.85,332.31 1314.65,321.88 1316.32,325.36 1318.13,323.27 1319.8,330.92 1321.61,344.13 1323,346.92 1324.95,342.74 1326.34,347.61 1327.73,345.52 1329.54,353.17 1331.62,354.56 1333.29,352.48 1334.68,357.35 1336.07,353.17 1337.46,353.87 1338.58,347.61 1339.97,327.86 1341.36,343.44 1342.75,350.39 1343.86,349 1346.23,355.26 1348.03,357.35 1349.98,346.22 1352.48,339.96 1354.57,340.66 1356.38,349.7 1358.05,350.39 1360.27,364.3 1361.94,328.14 1363.05,310.34 1366.39,321.18 1369.87,307.55 1371.26,323.27 1373.35,322.58 1375.43,330.92 1377.8,335.37 1381,325.36 1383.08,329.53 1384.75,335.09 1386.14,346.22 1387.95,346.92 1390.73,342.74 1392.12,345.52 1393.93,353.17 1395.32,348.31 1396.99,362.63 1399.08,347.61 1400.88,328.14 1401.58,290.59 1402.28,262.77 1403.67,261.38 1405.34,261.38 1407.84,240.52 1409.51,245.8 1411.18,246.36 1412.98,256.51 1414.38,248.17 1416.18,248.86 1418.55,269.72 1421.33,256.51 1424.81,265.55 1427.87,267.64 1430.09,259.99 1431.76,261.38 1433.43,253.73 1435.24,253.73 1436.63,269.72 1438.71,281.96 1440.38,279.46 1441,279.46" fill="none" stroke="#73bf69" stroke-width="1.2" stroke-linejoin="round"/>
<text x="1272.1" y="290.9" font-size="49" fill="#73bf69" textLength="114.3" lengthAdjust="spacingAndGlyphs" stroke="#73bf69" stroke-width="1.37">417.5</text>
<text x="1396.7" y="290.9" font-size="29.8" fill="#73bf69" textLength="19.1" lengthAdjust="spacingAndGlyphs" stroke="#73bf69" stroke-width="0.83">V</text>
<line x1="1431.2" y1="366.1" x2="1439.85" y2="357.3" stroke="#50525a" stroke-width="1.2"/>
<line x1="1436.1" y1="365.7" x2="1439.65" y2="362.2" stroke="#50525a" stroke-width="1.2"/>
<rect x="1450.5" y="148.5" width="196" height="219" fill="#181b1f" stroke="#2c2e33" rx="1.5"/>
<text x="1459.5" y="170" font-size="14" fill="#ccccdc" textLength="153" lengthAdjust="spacingAndGlyphs" stroke="#ccccdc" stroke-width="0.39">Level Sensor Battery...</text>
<path d="M1467.28,330.02 A85.5,85.5 0 0 1 1464.06,290.81 L1469.7,291.67 A79.8,79.8 0 0 0 1472.71,328.26 Z" fill="#f2495c"/>
<path d="M1464.06,290.81 A85.5,85.5 0 0 1 1548,218.1 L1548.04,223.8 A79.8,79.8 0 0 0 1469.7,291.67 Z" fill="#ff9830"/>
<path d="M1548,218.1 A85.5,85.5 0 0 1 1629.92,330.02 L1624.49,328.26 A79.8,79.8 0 0 0 1548.04,223.8 Z" fill="#73bf69"/>
<path d="M1474.23,327.77 A78.2,78.2 0 1 1 1622.97,327.77 L1594.06,318.37 A47.8,47.8 0 1 0 1503.14,318.37 Z" fill="#22252b"/>
<path d="M1474.23,327.77 A78.2,78.2 0 0 1 1618.09,267.73 L1591.08,281.68 A47.8,47.8 0 0 0 1503.14,318.37 Z" fill="#73bf69"/>
<text x="1510.8" y="317.9" font-size="23.9" fill="#73bf69" textLength="74.2" lengthAdjust="spacingAndGlyphs" stroke="#73bf69" stroke-width="0.35">3.26 V</text>
<line x1="1636.2" y1="366.1" x2="1644.85" y2="357.3" stroke="#50525a" stroke-width="1.2"/>
<line x1="1641.1" y1="365.7" x2="1644.65" y2="362.2" stroke="#50525a" stroke-width="1.2"/>
<rect x="835.5" y="376.5" width="264" height="333" fill="#181b1f" stroke="#2c2e33" rx="1.5"/>
<text x="844.25" y="398" font-size="14" fill="#ccccdc" textLength="75.75" lengthAdjust="spacingAndGlyphs" stroke="#ccccdc" stroke-width="0.39">Real Power</text>
<polygon points="836,472.3 1046.2,472.3 1046.4,690 1047.5,700 1053.25,701.25 1054.25,708 1056.25,703.75 1058.75,702.5 1060.5,704.5 1062.5,701.25 1063.75,699.5 1065,704.5 1067.5,702.5 1069.5,698.75 1072.5,701.25 1075,699.5 1077.5,700 1080,695.5 1082.5,697.5 1085,697 1087.5,699.5 1090,697 1092.5,696.25 1095,695.75 1097,694.5 1099,697 1099,697 1099,472.3" fill="#2a3c2f"/>
<polyline points="836,472.3 1046.2,472.3 1046.4,690 1047.5,700 1053.25,701.25 1054.25,708 1056.25,703.75 1058.75,702.5 1060.5,704.5 1062.5,701.25 1063.75,699.5 1065,704.5 1067.5,702.5 1069.5,698.75 1072.5,701.25 1075,699.5 1077.5,700 1080,695.5 1082.5,697.5 1085,697 1087.5,699.5 1090,697 1092.5,696.25 1095,695.75 1097,694.5 1099,697 1099,697" fill="none" stroke="#73bf69" stroke-width="1.2" stroke-linejoin="round"/>
<rect x="873.1" y="557.9" width="16.9" height="6.2" fill="#73bf69"/>
<text x="896.6" y="576.6" font-size="52.5" fill="#73bf69" textLength="109.7" lengthAdjust="spacingAndGlyphs" stroke="#73bf69" stroke-width="1.47">4.28</text>
<text x="1016.4" y="576.6" font-size="31.8" fill="#73bf69" textLength="47.8" lengthAdjust="spacingAndGlyphs" stroke="#73bf69" stroke-width="0.89">kW</text>
<line x1="1089.2" y1="708.1" x2="1097.85" y2="699.3" stroke="#50525a" stroke-width="1.2"/>
<line x1="1094.1" y1="707.7" x2="1097.65" y2="704.2" stroke="#50525a" stroke-width="1.2"/>
<rect x="1109.5" y="376.5" width="264" height="333" fill="#181b1f" stroke="#2c2e33" rx="1.5"/>
<text x="1118.25" y="398" font-size="14" fill="#ccccdc" textLength="105.5" lengthAdjust="spacingAndGlyphs" stroke="#ccccdc" stroke-width="0.39">Reactive Power</text>
<polygon points="1110,466.2 1320.2,466.2 1320.5,685 1321.5,695 1323.75,701.25 1325.5,696.25 1327.5,693.75 1329.5,695.5 1332,696.25 1335,698 1337.5,700 1339.25,696.25 1341.25,705 1343.75,702 1347.5,700 1350,702.5 1353.75,703.75 1356.25,707 1358.75,703 1362.5,703.75 1365,702.5 1367,705 1369.5,707.5 1372.5,707.5 1373,708 1373,466.2" fill="#2a3c2f"/>
<polyline points="1110,466.2 1320.2,466.2 1320.5,685 1321.5,695 1323.75,701.25 1325.5,696.25 1327.5,693.75 1329.5,695.5 1332,696.25 1335,698 1337.5,700 1339.25,696.25 1341.25,705 1343.75,702 1347.5,700 1350,702.5 1353.75,703.75 1356.25,707 1358.75,703 1362.5,703.75 1365,702.5 1367,705 1369.5,707.5 1372.5,707.5 1373,708" fill="none" stroke="#73bf69" stroke-width="1.2" stroke-linejoin="round"/>
<rect x="1152" y="557.7" width="16" height="5.8" fill="#73bf69"/>
<text x="1170.6" y="576" font-size="47.9" fill="#73bf69" textLength="88.9" lengthAdjust="spacingAndGlyphs" stroke="#73bf69" stroke-width="1.34">2.51</text>
<text x="1269.2" y="576" font-size="28.3" fill="#73bf69" textLength="65" lengthAdjust="spacingAndGlyphs" stroke="#73bf69" stroke-width="0.79">kVAr</text>
<line x1="1363.2" y1="708.1" x2="1371.85" y2="699.3" stroke="#50525a" stroke-width="1.2"/>
<line x1="1368.1" y1="707.7" x2="1371.65" y2="704.2" stroke="#50525a" stroke-width="1.2"/>
<rect x="1382.5" y="376.5" width="264" height="333" fill="#181b1f" stroke="#2c2e33" rx="1.5"/>
<text x="1391.75" y="398" font-size="14" fill="#ccccdc" textLength="109" lengthAdjust="spacingAndGlyphs" stroke="#ccccdc" stroke-width="0.39">Apparent Power</text>
<polygon points="1383,708.3 1592.9,708.3 1593.25,510 1593.75,480 1595,478 1597.5,481.25 1599.5,478 1601.25,474.5 1603.75,477 1606.25,477 1608.75,478 1611.25,480 1613,478 1615,482.5 1617,483.75 1619.5,479.5 1622.5,481.25 1626.25,482 1630,483 1633.75,483.75 1637.5,479.5 1640,478.75 1643,482 1645.5,480.5 1646,480.5 1646,709 1383,709" fill="#2a3c2f"/>
<polyline points="1383,708.3 1592.9,708.3 1593.25,510 1593.75,480 1595,478 1597.5,481.25 1599.5,478 1601.25,474.5 1603.75,477 1606.25,477 1608.75,478 1611.25,480 1613,478 1615,482.5 1617,483.75 1619.5,479.5 1622.5,481.25 1626.25,482 1630,483 1633.75,483.75 1637.5,479.5 1640,478.75 1643,482 1645.5,480.5 1646,480.5" fill="none" stroke="#73bf69" stroke-width="1.2" stroke-linejoin="round"/>
<text x="1423.6" y="577" font-size="52.5" fill="#73bf69" textLength="111.6" lengthAdjust="spacingAndGlyphs" stroke="#73bf69" stroke-width="1.47">5.32</text>
<text x="1545.5" y="577" font-size="31.8" fill="#73bf69" textLength="61.3" lengthAdjust="spacingAndGlyphs" stroke="#73bf69" stroke-width="0.89">kVA</text>
<line x1="1636.2" y1="708.1" x2="1644.85" y2="699.3" stroke="#50525a" stroke-width="1.2"/>
<line x1="1641.1" y1="707.7" x2="1644.65" y2="704.2" stroke="#50525a" stroke-width="1.2"/>
<rect x="16.5" y="718.5" width="811" height="295" fill="#181b1f" stroke="#2c2e33" rx="1.5"/>
<text x="25.3" y="740" font-size="14" fill="#ccccdc" textLength="106.6" lengthAdjust="spacingAndGlyphs" stroke="#ccccdc" stroke-width="0.39">System Monitor</text>
<g clip-path="url(#c7)">
<line x1="225.5" y1="767" x2="225.5" y2="988" stroke="rgba(240,250,255,0.09)" stroke-width="1"/>
<line x1="278.5" y1="767" x2="278.5" y2="988" stroke="rgba(240,250,255,0.09)" stroke-width="1"/>
<line x1="331.5" y1="767" x2="331.5" y2="988" stroke="rgba(240,250,255,0.09)" stroke-width="1"/>
<line x1="384.5" y1="767" x2="384.5" y2="988" stroke="rgba(240,250,255,0.09)" stroke-width="1"/>
<line x1="437.5" y1="767" x2="437.5" y2="988" stroke="rgba(240,250,255,0.09)" stroke-width="1"/>
<line x1="490.5" y1="767" x2="490.5" y2="988" stroke="rgba(240,250,255,0.09)" stroke-width="1"/>
<line x1="543.5" y1="767" x2="543.5" y2="988" stroke="rgba(240,250,255,0.09)" stroke-width="1"/>
<line x1="596.5" y1="767" x2="596.5" y2="988" stroke="rgba(240,250,255,0.09)" stroke-width="1"/>
<line x1="649.5" y1="767" x2="649.5" y2="988" stroke="rgba(240,250,255,0.09)" stroke-width="1"/>
<line x1="702.5" y1="767" x2="702.5" y2="988" stroke="rgba(240,250,255,0.09)" stroke-width="1"/>
<line x1="756.5" y1="767" x2="756.5" y2="988" stroke="rgba(240,250,255,0.09)" stroke-width="1"/>
<line x1="809.5" y1="767" x2="809.5" y2="988" stroke="rgba(240,250,255,0.09)" stroke-width="1"/>
<rect x="174" y="767" width="509" height="97.7" fill="#b13b4b"/>
<rect x="683" y="767" width="128.2" height="97.7" fill="#588e53"/>
<rect x="174" y="886" width="510" height="97.8" fill="#b13b4b"/>
<rect x="684" y="886" width="127.2" height="97.8" fill="#588e53"/>
<line x1="225.5" y1="767" x2="225.5" y2="984" stroke="#ffffff" stroke-width="1" stroke-opacity="0.055"/>
<text x="209.6" y="1003.2" font-size="12" fill="#ccccdc" textLength="31.2" lengthAdjust="spacingAndGlyphs" stroke="#ccccdc" stroke-width="0.2">10:00</text>
<line x1="278.5" y1="767" x2="278.5" y2="984" stroke="#ffffff" stroke-width="1" stroke-opacity="0.055"/>
<text x="264.1" y="1003.2" font-size="12" fill="#ccccdc" textLength="28.2" lengthAdjust="spacingAndGlyphs" stroke="#ccccdc" stroke-width="0.2">11:00</text>
<line x1="331.5" y1="767" x2="331.5" y2="984" stroke="#ffffff" stroke-width="1" stroke-opacity="0.055"/>
<text x="315.9" y="1003.2" font-size="12" fill="#ccccdc" textLength="30.6" lengthAdjust="spacingAndGlyphs" stroke="#ccccdc" stroke-width="0.2">12:00</text>
<line x1="384.5" y1="767" x2="384.5" y2="984" stroke="#ffffff" stroke-width="1" stroke-opacity="0.055"/>
<text x="368.9" y="1003.2" font-size="12" fill="#ccccdc" textLength="30.6" lengthAdjust="spacingAndGlyphs" stroke="#ccccdc" stroke-width="0.2">13:00</text>
<line x1="437.5" y1="767" x2="437.5" y2="984" stroke="#ffffff" stroke-width="1" stroke-opacity="0.055"/>
<text x="421.6" y="1003.2" font-size="12" fill="#ccccdc" textLength="31.2" lengthAdjust="spacingAndGlyphs" stroke="#ccccdc" stroke-width="0.2">14:00</text>
<line x1="490.5" y1="767" x2="490.5" y2="984" stroke="#ffffff" stroke-width="1" stroke-opacity="0.055"/>
<text x="474.65" y="1003.2" font-size="12" fill="#ccccdc" textLength="31.1" lengthAdjust="spacingAndGlyphs" stroke="#ccccdc" stroke-width="0.2">15:00</text>
<line x1="543.5" y1="767" x2="543.5" y2="984" stroke="#ffffff" stroke-width="1" stroke-opacity="0.055"/>
<text x="527.65" y="1003.2" font-size="12" fill="#ccccdc" textLength="31.1" lengthAdjust="spacingAndGlyphs" stroke="#ccccdc" stroke-width="0.2">16:00</text>
<line x1="596.5" y1="767" x2="596.5" y2="984" stroke="#ffffff" stroke-width="1" stroke-opacity="0.055"/>
<text x="581.1" y="1003.2" font-size="12" fill="#ccccdc" textLength="30.2" lengthAdjust="spacingAndGlyphs" stroke="#ccccdc" stroke-width="0.2">17:00</text>
<line x1="649.5" y1="767" x2="649.5" y2="984" stroke="#ffffff" stroke-width="1" stroke-opacity="0.055"/>
<text x="633.65" y="1003.2" font-size="12" fill="#ccccdc" textLength="31.1" lengthAdjust="spacingAndGlyphs" stroke="#ccccdc" stroke-width="0.2">18:00</text>
<line x1="702.5" y1="767" x2="702.5" y2="984" stroke="#ffffff" stroke-width="1" stroke-opacity="0.055"/>
<text x="686.65" y="1003.2" font-size="12" fill="#ccccdc" textLength="31.1" lengthAdjust="spacingAndGlyphs" stroke="#ccccdc" stroke-width="0.2">19:00</text>
<line x1="756.5" y1="767" x2="756.5" y2="984" stroke="#ffffff" stroke-width="1" stroke-opacity="0.055"/>
<text x="739.45" y="1003.2" font-size="12" fill="#ccccdc" textLength="33.5" lengthAdjust="spacingAndGlyphs" stroke="#ccccdc" stroke-width="0.2">20:00</text>
<line x1="809.5" y1="767" x2="809.5" y2="984" stroke="#ffffff" stroke-width="1" stroke-opacity="0.055"/>
<text x="793.9" y="1003.2" font-size="12" fill="#ccccdc" textLength="30.6" lengthAdjust="spacingAndGlyphs" stroke="#ccccdc" stroke-width="0.2">21:00</text>
</g>
<rect x="819" y="990" width="8" height="18" fill="#181b1f"/>
<text x="88.9" y="820" font-size="12" fill="#ccccdc" textLength="68.9" lengthAdjust="spacingAndGlyphs" stroke="#ccccdc" stroke-width="0.2">App Control</text>
<text x="26.5" y="939" font-size="12" fill="#ccccdc" textLength="131.3" lengthAdjust="spacingAndGlyphs" stroke="#ccccdc" stroke-width="0.2">Motor Contactor Staus</text>
<line x1="817.2" y1="1012.1" x2="825.85" y2="1003.3" stroke="#50525a" stroke-width="1.2"/>
<line x1="822.1" y1="1011.7" x2="825.65" y2="1008.2" stroke="#50525a" stroke-width="1.2"/>
<rect x="835.5" y="718.5" width="811" height="295" fill="#181b1f" stroke="#2c2e33" rx="1.5"/>
<text x="844.3" y="740" font-size="14" fill="#ccccdc" textLength="170" lengthAdjust="spacingAndGlyphs" stroke="#ccccdc" stroke-width="0.39">Power Usage Cumulative</text>
<line x1="900.5" y1="767.5" x2="1630.5" y2="767.5" stroke="rgba(240,250,255,0.09)" stroke-width="1"/>
<text x="858.4" y="771.4" font-size="12" fill="#ccccdc" textLength="36.2" lengthAdjust="spacingAndGlyphs" stroke="#ccccdc" stroke-width="0.2">2 kWh</text>
<line x1="900.5" y1="798.5" x2="1630.5" y2="798.5" stroke="rgba(240,250,255,0.09)" stroke-width="1"/>
<text x="857.7" y="802.4" font-size="12" fill="#ccccdc" textLength="36.9" lengthAdjust="spacingAndGlyphs" stroke="#ccccdc" stroke-width="0.2">0 kWh</text>
<line x1="900.5" y1="829.5" x2="1630.5" y2="829.5" stroke="rgba(240,250,255,0.09)" stroke-width="1"/>
<text x="853.2" y="833.4" font-size="12" fill="#ccccdc" textLength="41.4" lengthAdjust="spacingAndGlyphs" stroke="#ccccdc" stroke-width="0.2">-2 kWh</text>
<line x1="900.5" y1="860.5" x2="1630.5" y2="860.5" stroke="rgba(240,250,255,0.09)" stroke-width="1"/>
<text x="852.6" y="864.4" font-size="12" fill="#ccccdc" textLength="42" lengthAdjust="spacingAndGlyphs" stroke="#ccccdc" stroke-width="0.2">-4 kWh</text>
<line x1="900.5" y1="891.5" x2="1630.5" y2="891.5" stroke="rgba(240,250,255,0.09)" stroke-width="1"/>
<text x="852.9" y="895.4" font-size="12" fill="#ccccdc" textLength="41.7" lengthAdjust="spacingAndGlyphs" stroke="#ccccdc" stroke-width="0.2">-6 kWh</text>
<line x1="900.5" y1="922.5" x2="1630.5" y2="922.5" stroke="rgba(240,250,255,0.09)" stroke-width="1"/>
<text x="852.9" y="926.4" font-size="12" fill="#ccccdc" textLength="41.7" lengthAdjust="spacingAndGlyphs" stroke="#ccccdc" stroke-width="0.2">-8 kWh</text>
<line x1="900.5" y1="953.5" x2="1630.5" y2="953.5" stroke="rgba(240,250,255,0.09)" stroke-width="1"/>
<text x="847.4" y="957.4" font-size="12" fill="#ccccdc" textLength="47.2" lengthAdjust="spacingAndGlyphs" stroke="#ccccdc" stroke-width="0.2">-10 kWh</text>
<line x1="900.5" y1="984.5" x2="1630.5" y2="984.5" stroke="rgba(240,250,255,0.09)" stroke-width="1"/>
<text x="847.7" y="988.4" font-size="12" fill="#ccccdc" textLength="46.9" lengthAdjust="spacingAndGlyphs" stroke="#ccccdc" stroke-width="0.2">-12 kWh</text>
<g clip-path="url(#c8)">
<line x1="958.5" y1="767.5" x2="958.5" y2="988.5" stroke="rgba(240,250,255,0.09)" stroke-width="1"/>
<text x="942.6" y="1003.2" font-size="12" fill="#ccccdc" textLength="31.2" lengthAdjust="spacingAndGlyphs" stroke="#ccccdc" stroke-width="0.2">10:00</text>
<line x1="1019.5" y1="767.5" x2="1019.5" y2="988.5" stroke="rgba(240,250,255,0.09)" stroke-width="1"/>
<text x="1005.1" y="1003.2" font-size="12" fill="#ccccdc" textLength="28.2" lengthAdjust="spacingAndGlyphs" stroke="#ccccdc" stroke-width="0.2">11:00</text>
<line x1="1080.5" y1="767.5" x2="1080.5" y2="988.5" stroke="rgba(240,250,255,0.09)" stroke-width="1"/>
<text x="1064.9" y="1003.2" font-size="12" fill="#ccccdc" textLength="30.6" lengthAdjust="spacingAndGlyphs" stroke="#ccccdc" stroke-width="0.2">12:00</text>
<line x1="1140.5" y1="767.5" x2="1140.5" y2="988.5" stroke="rgba(240,250,255,0.09)" stroke-width="1"/>
<text x="1124.9" y="1003.2" font-size="12" fill="#ccccdc" textLength="30.6" lengthAdjust="spacingAndGlyphs" stroke="#ccccdc" stroke-width="0.2">13:00</text>
<line x1="1201.5" y1="767.5" x2="1201.5" y2="988.5" stroke="rgba(240,250,255,0.09)" stroke-width="1"/>
<text x="1185.6" y="1003.2" font-size="12" fill="#ccccdc" textLength="31.2" lengthAdjust="spacingAndGlyphs" stroke="#ccccdc" stroke-width="0.2">14:00</text>
<line x1="1262.5" y1="767.5" x2="1262.5" y2="988.5" stroke="rgba(240,250,255,0.09)" stroke-width="1"/>
<text x="1246.65" y="1003.2" font-size="12" fill="#ccccdc" textLength="31.1" lengthAdjust="spacingAndGlyphs" stroke="#ccccdc" stroke-width="0.2">15:00</text>
<line x1="1323.5" y1="767.5" x2="1323.5" y2="988.5" stroke="rgba(240,250,255,0.09)" stroke-width="1"/>
<text x="1307.65" y="1003.2" font-size="12" fill="#ccccdc" textLength="31.1" lengthAdjust="spacingAndGlyphs" stroke="#ccccdc" stroke-width="0.2">16:00</text>
<line x1="1384.5" y1="767.5" x2="1384.5" y2="988.5" stroke="rgba(240,250,255,0.09)" stroke-width="1"/>
<text x="1369.1" y="1003.2" font-size="12" fill="#ccccdc" textLength="30.2" lengthAdjust="spacingAndGlyphs" stroke="#ccccdc" stroke-width="0.2">17:00</text>
<line x1="1445.5" y1="767.5" x2="1445.5" y2="988.5" stroke="rgba(240,250,255,0.09)" stroke-width="1"/>
<text x="1429.65" y="1003.2" font-size="12" fill="#ccccdc" textLength="31.1" lengthAdjust="spacingAndGlyphs" stroke="#ccccdc" stroke-width="0.2">18:00</text>
<line x1="1506.5" y1="767.5" x2="1506.5" y2="988.5" stroke="rgba(240,250,255,0.09)" stroke-width="1"/>
<text x="1490.65" y="1003.2" font-size="12" fill="#ccccdc" textLength="31.1" lengthAdjust="spacingAndGlyphs" stroke="#ccccdc" stroke-width="0.2">19:00</text>
<line x1="1567.5" y1="767.5" x2="1567.5" y2="988.5" stroke="rgba(240,250,255,0.09)" stroke-width="1"/>
<text x="1550.45" y="1003.2" font-size="12" fill="#ccccdc" textLength="33.5" lengthAdjust="spacingAndGlyphs" stroke="#ccccdc" stroke-width="0.2">20:00</text>
<line x1="1627.5" y1="767.5" x2="1627.5" y2="988.5" stroke="rgba(240,250,255,0.09)" stroke-width="1"/>
<text x="1611.9" y="1003.2" font-size="12" fill="#ccccdc" textLength="30.6" lengthAdjust="spacingAndGlyphs" stroke="#ccccdc" stroke-width="0.2">21:00</text>
</g>
<rect x="1638.3" y="990" width="8" height="18" fill="#181b1f"/>
<polyline points="900.5,798.4 1014,798.4 1016,797.6 1246,797.6 1248,796.8 1483.4,796.8 1629.6,956.1" fill="none" stroke="#73bf69" stroke-width="1.1" stroke-linejoin="round"/>
<line x1="1636.2" y1="1012.1" x2="1644.85" y2="1003.3" stroke="#50525a" stroke-width="1.2"/>
<line x1="1641.1" y1="1011.7" x2="1644.65" y2="1008.2" stroke="#50525a" stroke-width="1.2"/>
</svg>
</body>
</html>
